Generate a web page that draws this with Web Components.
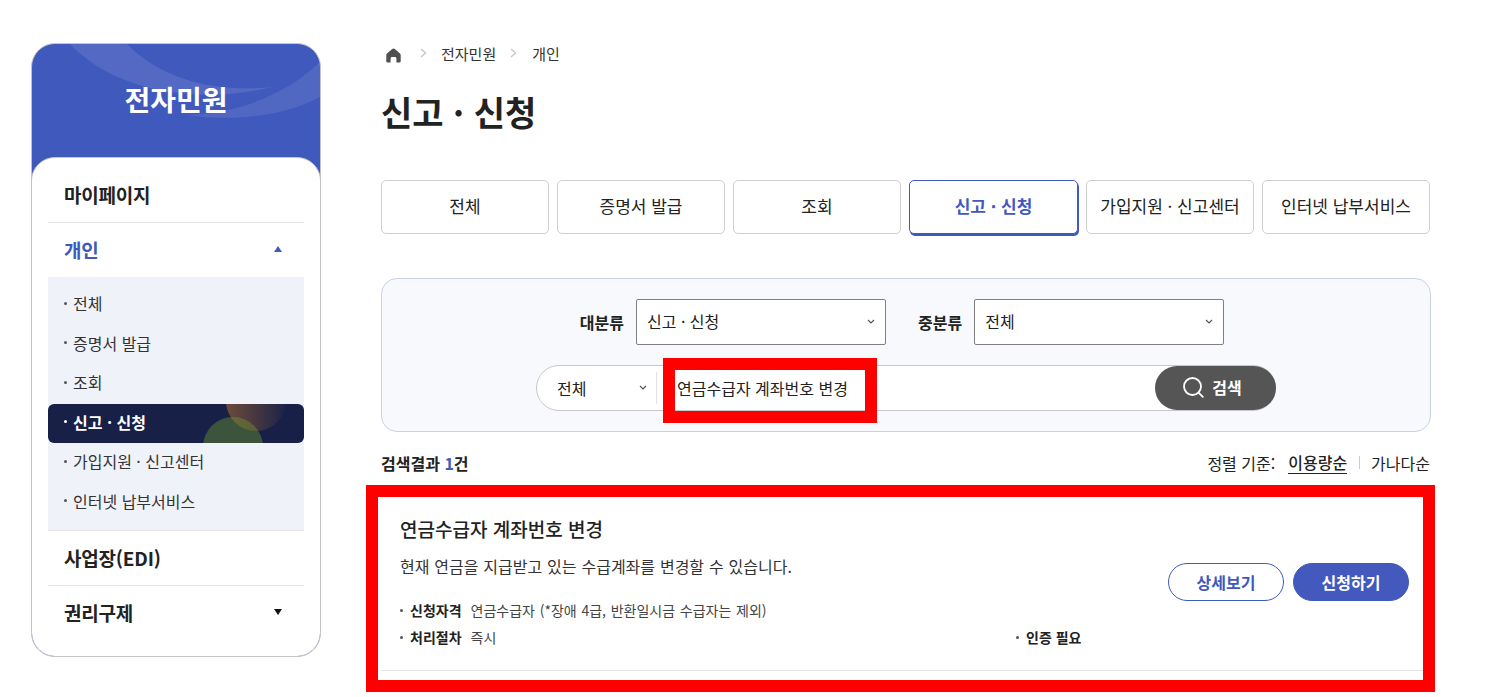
<!DOCTYPE html>
<html lang="ko">
<head>
<meta charset="utf-8">
<title>신고 · 신청</title>
<style>
html,body{margin:0;padding:0;background:#fff}
body{font-family:"Noto Sans CJK KR","Noto Sans",sans-serif;color:#222;height:697px;overflow:hidden}
app-shell{display:flex;align-items:flex-start;gap:60px;padding:43px 0 0 31px}
</style>
</head>
<body>
<app-shell>
  <side-nav></side-nav>
  <main-view></main-view>
</app-shell>
<script>
const FONT='"Noto Sans CJK KR","Noto Sans",sans-serif';
class Base extends HTMLElement{
  render(html){this.attachShadow({mode:'open'}).innerHTML=html;}
}
customElements.define('app-shell',class extends Base{
  connectedCallback(){if(!this.shadowRoot)this.render('<slot></slot>');}
});
customElements.define('side-nav',class extends Base{
  connectedCallback(){if(this.shadowRoot)return;this.render(`<style>
:host{display:block;flex:0 0 290px;width:290px;height:614px;box-sizing:border-box;position:relative;font-family:${FONT}}
.wrap{height:100%;box-sizing:border-box;border:1px solid #c6c6c6;border-radius:24px;background:#4059bd;overflow:hidden;display:flex;flex-direction:column;margin:0}
.head{height:113px;flex:none;position:relative;display:flex;justify-content:center;padding-top:35px;box-sizing:border-box}
.head svg{position:absolute;left:0;top:0}
h2{margin:0;font-size:28px;line-height:40px;font-weight:700;color:#fff;position:relative}
.panel{flex:1;background:#fff;margin:0 -1px -1px;border:1px solid #c6c6c6;border-radius:24px;padding:10px 16px 0}
.row{height:52px;padding:0 22px 2px 16px;display:flex;align-items:center;justify-content:space-between;font-size:19px;font-weight:700;color:#222;border-bottom:1px solid #e4e4e6;letter-spacing:-.2px}
.row.open{color:#4059bd;border-bottom:0}
.row.last{border-bottom:0}
.up,.down{width:0;height:0;border-left:4.5px solid transparent;border-right:4.5px solid transparent}
.up{border-bottom:6px solid #4059bd}
.down{border-top:6px solid #111}
ul{list-style:none;margin:0;padding:8px 0 8px;background:#eff2f8;border-bottom:1px solid #e4e4e6}
li{height:39.5px;box-sizing:border-box;padding:0 0 3px 16px;display:flex;align-items:center;font-size:16px;color:#333;gap:6px;position:relative;overflow:hidden}
li::before{content:"";width:3px;height:3px;border-radius:50%;background:#555;flex:none;position:relative;z-index:1}
li span{position:relative;z-index:1}
li.on{background:#182048;color:#fff;font-weight:700;border-radius:6px}
li.on::before{background:#fff}
li svg{position:absolute;left:0;top:0}
</style>
<div class="wrap">
  <div class="head">
    <svg width="288" height="113" viewBox="0 0 288 113"><path d="M38 0C80 45 160 62 241 43C190 48 135 40 95 0Z" fill="#fff" opacity=".1"/><path d="M155 71C190 76 245 76 288 53V18C255 50 205 70 155 71Z" fill="#fff" opacity=".09"/></svg>
    <h2>전자민원</h2>
  </div>
  <div class="panel">
    <div class="row">마이페이지</div>
    <div class="row open">개인<i class="up"></i></div>
    <ul>
      <li><span>전체</span></li>
      <li><span>증명서 발급</span></li>
      <li><span>조회</span></li>
      <li class="on"><svg width="256" height="39" viewBox="0 0 256 39"><defs><linearGradient id="g" x1="0" x2="1" y1="0" y2="0"><stop offset="0" stop-color="#8a5a35" stop-opacity=".75"/><stop offset="1" stop-color="#8a5a35" stop-opacity=".04"/></linearGradient></defs><circle cx="208" cy="-3" r="30" fill="url(#g)"/><circle cx="185" cy="43" r="30" fill="#6f9a2e" fill-opacity=".42"/></svg><span>신고 · 신청</span></li>
      <li><span>가입지원 · 신고센터</span></li>
      <li><span>인터넷 납부서비스</span></li>
    </ul>
    <div class="row">사업장(EDI)</div>
    <div class="row last">권리구제<i class="down"></i></div>
  </div>
</div>`);}
});
customElements.define('bread-crumbs',class extends Base{
  connectedCallback(){if(this.shadowRoot)return;
  const chev='<svg class="c" width="7" height="10" viewBox="0 0 7 10"><path d="M1 1l4.500 4L1 9" fill="none" stroke="#c8c8c8" stroke-width="1.400"/></svg>';
  this.render(`<style>
:host{display:flex;align-items:center;height:20px;font-size:15px;color:#333;padding-left:5px;font-family:${FONT}}
.c{margin:0 14px 0 19px}
.c.b{margin:0 15px 0 14px}
.h{margin-top:4px}
</style>
<svg class="h" width="15" height="15" viewBox="0 0 15 15"><path d="M7.500.5C8 .5 8.400.7 8.800 1l5.200 4.400c.4.4.7.9.7 1.500v6.300c0 .8-.6 1.300-1.300 1.300h-3V10.600c0-.9-.6-1.500-1.500-1.500H6.100c-.9 0-1.500.6-1.500 1.500v3.900h-3C.9 14.500.3 14 .3 13.200V6.900c0-.6.3-1.100.7-1.500L6.200 1c.4-.3.8-.5 1.300-.5z" fill="#505050"/></svg>
${chev}<span>전자민원</span>${chev.replace('class="c"','class="c b"')}<span>개인</span>`);}
});
customElements.define('tab-bar',class extends Base{
  connectedCallback(){if(this.shadowRoot)return;
  const t=['전체','증명서 발급','조회','신고 · 신청','가입지원 · 신고센터','인터넷 납부서비스'];
  this.render(`<style>
:host{display:grid;grid-template-columns:168px 168px 168px 169px 168px 168px;gap:8px;font-family:${FONT}}
div{height:54px;box-sizing:border-box;border:1px solid #cfcfcf;border-radius:5px;padding-bottom:3px;display:flex;align-items:center;justify-content:center;font-size:17px;color:#222;background:#fff}
.on{border-color:#4059bd;color:#4059bd;font-weight:700;box-shadow:1px 2px 0 #4059bd}
</style>${t.map((x,i)=>`<div class="${i==3?'on':''}">${x}</div>`).join('')}`);}
});
const chevSm='<svg width="8" height="6" viewBox="0 0 8 6"><path d="M1 1l3 3 3-3" fill="none" stroke="#555" stroke-width="1.200"/></svg>';
customElements.define('select-box',class extends Base{
  connectedCallback(){if(this.shadowRoot)return;
  this.render(`<style>
:host{display:flex;align-items:center;justify-content:space-between;width:250px;height:46px;box-sizing:border-box;border:1px solid #808080;border-radius:2px;background:#fff;padding:0 10px 2px 10px;font-size:16px;color:#222;font-family:${FONT}}
svg{margin-top:2px}
</style><slot></slot>${chevSm}`);}
});
customElements.define('search-panel',class extends Base{
  connectedCallback(){if(this.shadowRoot)return;
  this.render(`<style>
:host{display:flex;flex-direction:column;align-items:center;height:154px;box-sizing:border-box;border:1px solid #c9d1e8;border-radius:16px;background:#f8f9fc;padding-top:20px;position:relative;font-family:${FONT};margin-right:-1px}
.top{display:flex;align-items:center;position:relative;left:-4px}
label{font-size:16px;font-weight:700;color:#222;margin-right:12px}
label.m{margin-left:32px}
.search{margin-top:20px;width:740px;height:46px;box-sizing:border-box;border:1px solid #c8c8c8;border-radius:23px;background:#fff;display:flex;align-items:center}
.kind{width:120px;height:32px;box-sizing:border-box;border-right:1px solid #e3e3e3;display:flex;align-items:center;justify-content:space-between;padding:0 9px 0 20px;font-size:16px;flex:none;color:#222}
.q{flex:1;padding-left:20px;font-size:16px;color:#222}
button{all:unset;width:121px;height:44px;border-radius:22px;background:#555;color:#fff;font-size:16px;font-weight:700;display:flex;align-items:center;justify-content:center;gap:8px;margin-right:-1px;padding:0 6px 2px 0;box-sizing:border-box;flex:none;font-family:${FONT}}
.mark{position:absolute;left:281px;top:79px;width:214px;height:65px;box-sizing:border-box;border:12px solid #f00;pointer-events:none}
</style>
<div class="top"><label>대분류</label><select-box>신고 · 신청</select-box><label class="m">중분류</label><select-box>전체</select-box></div>
<div class="search"><div class="kind">전체${chevSm}</div><div class="q">연금수급자 계좌번호 변경</div><button><svg width="21" height="21" viewBox="0 0 21 21"><circle cx="9.500" cy="9.500" r="8.500" fill="none" stroke="#fff" stroke-width="1.800"/><path d="M15.800 15.800l4 4" stroke="#fff" stroke-width="1.800" stroke-linecap="round"/></svg>검색</button></div>
<div class="mark"></div>`);}
});
customElements.define('result-bar',class extends Base{
  connectedCallback(){if(this.shadowRoot)return;
  this.render(`<style>
:host{display:flex;align-items:center;justify-content:space-between;height:43px;box-sizing:border-box;padding-bottom:2px;font-size:16px;color:#222;font-family:${FONT}}
b{font-weight:700}
b i{font-style:normal;color:#4059bd}
.s{display:flex;align-items:center}
.u{margin-left:13px;font-weight:500;border-bottom:1px solid #222;line-height:21px}
.sep{width:1px;height:13px;background:#ccc;margin:0 11px 0 12px}
</style>
<b>검색결과 <i>1</i>건</b>
<div class="s"><span>정렬 기준:</span><span class="u">이용량순</span><i class="sep"></i><span>가나다순</span></div>`);}
});
customElements.define('result-card',class extends Base{
  connectedCallback(){if(this.shadowRoot)return;
  this.render(`<style>
:host{display:block;margin:0 -5px 0 -15px;height:207px;box-sizing:border-box;border:12px solid #f00;background:#fff;font-family:${FONT}}
.in{height:174px;margin-left:3px;border-bottom:1px solid #e4e4e6;position:relative;padding:19px 0 0 19px;box-sizing:border-box;display:flex}
.body{flex:1}
h3{margin:0;font-size:19px;line-height:26px;font-weight:500;color:#222}
p{margin:12px 0 0;font-size:16px;line-height:24px;color:#333;word-spacing:.4px}
.meta{display:grid;grid-template-columns:616px 1fr;margin-top:19px;font-size:14px;line-height:27px;color:#444;word-spacing:.8px}
.m{display:flex;align-items:center;gap:7px}
.m::before{content:"";width:3px;height:3px;border-radius:50%;background:#555;flex:none}
.m b{font-weight:700;color:#222;margin-right:2px;word-spacing:0}
.btns{position:absolute;right:14px;top:66px;display:flex;gap:9px}
a{width:116px;height:38px;box-sizing:border-box;border:1px solid #4059bd;border-radius:19px;display:flex;align-items:center;justify-content:center;font-size:16px;font-weight:700;color:#4059bd;background:#fff}
a.f{background:#4359bd;color:#fff}
</style>
<div class="in"><div class="body">
<h3>연금수급자 계좌번호 변경</h3>
<p>현재 연금을 지급받고 있는 수급계좌를 변경할 수 있습니다.</p>
<div class="meta"><div class="m"><b>신청자격</b> 연금수급자 (*장애 4급, 반환일시금 수급자는 제외)</div><div></div><div class="m"><b>처리절차</b> 즉시</div><div class="m"><b>인증 필요</b></div></div>
</div><div class="btns"><a>상세보기</a><a class="f">신청하기</a></div></div>`);}
});
customElements.define('main-view',class extends Base{
  connectedCallback(){if(this.shadowRoot)return;
  this.render(`<style>
:host{display:block;width:1049px;flex:none;font-family:${FONT}}
h1{margin:25px 0 44px;font-size:34px;line-height:48px;font-weight:700;color:#222}
tab-bar{margin-bottom:44px}
search-panel{margin-bottom:10px}
</style>
<bread-crumbs></bread-crumbs>
<h1>신고 · 신청</h1>
<tab-bar></tab-bar>
<search-panel></search-panel>
<result-bar></result-bar>
<result-card></result-card>`);}
});
</script>
</body>
</html>
